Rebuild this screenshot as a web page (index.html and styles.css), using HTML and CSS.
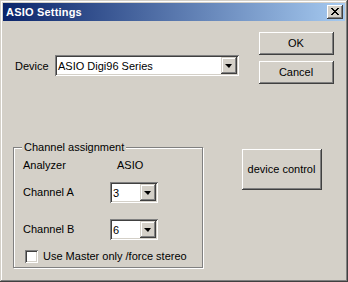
FILE: index.html
```html
<!DOCTYPE html>
<html>
<head>
<meta charset="utf-8">
<link rel="stylesheet" href="styles.css">
</head>
<body>
<div class="window">
  <div class="titlebar">
    <span class="title">ASIO Settings</span>
    <span class="close">
      <svg width="8" height="7" viewBox="0 0 8 7" shape-rendering="crispEdges">
        <path d="M0 0h2v1h-2zM6 0h2v1h-2zM1 1h2v1h-2zM5 1h2v1h-2zM2 2h4v1h-4zM3 3h2v1h-2zM2 4h4v1h-4zM1 5h2v1h-2zM5 5h2v1h-2zM0 6h2v1h-2zM6 6h2v1h-2z" fill="#000"/>
      </svg>
    </span>
  </div>
  <div class="client">
    <div class="left">
      <div class="device-row">
        <span class="device-label">Device</span>
        <div class="combo combo-device">
          <span class="combo-text">ASIO Digi96 Series</span>
          <span class="drop"><i class="arrow"></i></span>
        </div>
      </div>
      <div class="group">
        <span class="legend">Channel assignment</span>
        <div class="grid">
          <span class="hdr">Analyzer</span>
          <span class="hdr hdr-asio">ASIO</span>
          <span class="lbl lbl-a">Channel A</span>
          <div class="combo combo-small combo-a">
            <span class="combo-text">3</span>
            <span class="drop"><i class="arrow"></i></span>
          </div>
          <span class="lbl lbl-b">Channel B</span>
          <div class="combo combo-small combo-b">
            <span class="combo-text">6</span>
            <span class="drop"><i class="arrow"></i></span>
          </div>
        </div>
        <label class="check-row">
          <span class="checkbox"></span>
          <span class="check-text">Use Master only /force stereo</span>
        </label>
      </div>
    </div>
    <div class="right">
      <div class="btn btn-ok">OK</div>
      <div class="btn btn-cancel">Cancel</div>
      <div class="btn btn-dev">device control</div>
    </div>
  </div>
</div>
</body>
</html>
```

FILE: styles.css
```css
* { box-sizing: border-box; }
html, body {
  margin: 0;
  padding: 0;
  width: 348px;
  height: 282px;
  overflow: hidden;
  background: #d4d0c8;
}
body {
  font-family: "Liberation Sans", Arial, sans-serif;
  font-size: 11px;
  color: #000;
}
.window {
  width: 348px;
  height: 282px;
  padding: 3px;
  background: #d4d0c8;
  box-shadow: inset -1px -1px 0 #404040, inset 1px 1px 0 #d4d0c8,
              inset -2px -2px 0 #808080, inset 2px 2px 0 #fff;
  display: flex;
  flex-direction: column;
}
.titlebar {
  height: 18px;
  background: linear-gradient(to right, #0a246a, #a6caf0);
  display: flex;
  align-items: center;
  justify-content: space-between;
  padding: 0 2px 0 2px;
  flex: none;
}
.title {
  color: #fff;
  font-weight: bold;
  font-size: 11px;
  letter-spacing: 0.2px;
  padding-left: 1px;
}
.close {
  width: 16px;
  height: 14px;
  background: #d4d0c8;
  box-shadow: inset -1px -1px 0 #404040, inset 1px 1px 0 #fff,
              inset -2px -2px 0 #808080;
  display: flex;
  align-items: center;
  justify-content: center;
  padding: 0 1px 1px 0;
}
.close svg { display: block; }
.client {
  flex: 1;
  display: flex;
  padding-top: 1px;
}
.left {
  width: 239px;
  padding-left: 10px;
  flex: none;
}
.device-row {
  display: flex;
  align-items: center;
  margin-top: 33px;
  padding-left: 2px;
}
.device-label {
  width: 40px;
}
.combo {
  position: relative;
  height: 21px;
  background: #fff;
  box-shadow: inset 1px 1px 0 #808080, inset -1px -1px 0 #fff,
              inset 2px 2px 0 #404040, inset -2px -2px 0 #d4d0c8;
  display: flex;
  align-items: center;
  justify-content: space-between;
  padding: 2px;
}
.combo-device { width: 184px; }
.combo-small { width: 48px; }
.combo-text {
  padding-left: 1px;
  font-size: 11px;
}
.drop {
  width: 16px;
  height: 17px;
  background: #d4d0c8;
  box-shadow: inset -1px -1px 0 #404040, inset 1px 1px 0 #d4d0c8,
              inset -2px -2px 0 #808080, inset 2px 2px 0 #fff;
  display: flex;
  align-items: center;
  justify-content: center;
}
.arrow {
  display: block;
  width: 0;
  height: 0;
  border-left: 4px solid transparent;
  border-right: 3px solid transparent;
  border-top: 4px solid #000;
  margin-left: -1px;
}
.group {
  position: relative;
  margin-top: 71px;
  width: 190px;
  height: 121px;
  border: 1px solid #808080;
  box-shadow: 1px 1px 0 #fff, inset 1px 1px 0 #fff;
  padding: 11px 0 0 9px;
}
.legend {
  position: absolute;
  left: 8px;
  top: -7px;
  padding: 0 2px;
  background: #d4d0c8;
  line-height: 13px;
}
.grid {
  display: grid;
  grid-template-columns: 87px 48px;
  grid-template-rows: 13px 10px 21px 16px 21px;
  align-items: center;
}
.hdr { line-height: 13px; grid-row: 1; }
.hdr-asio { padding-left: 7px; }
.lbl-a, .combo-a { grid-row: 3; }
.lbl-b, .combo-b { grid-row: 5; }
.lbl { grid-column: 1; line-height: 13px; }
.grid .combo { grid-column: 2; }
.check-row {
  display: flex;
  align-items: center;
  margin-top: 10px;
  margin-left: 2px;
}
.checkbox {
  width: 13px;
  height: 13px;
  background: #fff;
  box-shadow: inset 1px 1px 0 #808080, inset -1px -1px 0 #fff,
              inset 2px 2px 0 #404040, inset -2px -2px 0 #d4d0c8;
  flex: none;
}
.check-text { margin-left: 5px; line-height: 13px; }
.right {
  flex: 1;
  display: flex;
  flex-direction: column;
  align-items: flex-start;
  padding-top: 10px;
}
.btn {
  background: #d4d0c8;
  box-shadow: inset -1px -1px 0 #404040, inset 1px 1px 0 #fff,
              inset -2px -2px 0 #808080;
  display: flex;
  align-items: center;
  justify-content: center;
  padding: 0 1px 1px 0;
}
.btn-ok, .btn-cancel {
  width: 75px;
  height: 23px;
  margin-left: 17px;
}
.btn-cancel { margin-top: 6px; }
.btn-dev {
  width: 80px;
  height: 41px;
  margin-top: 65px;
}
```
